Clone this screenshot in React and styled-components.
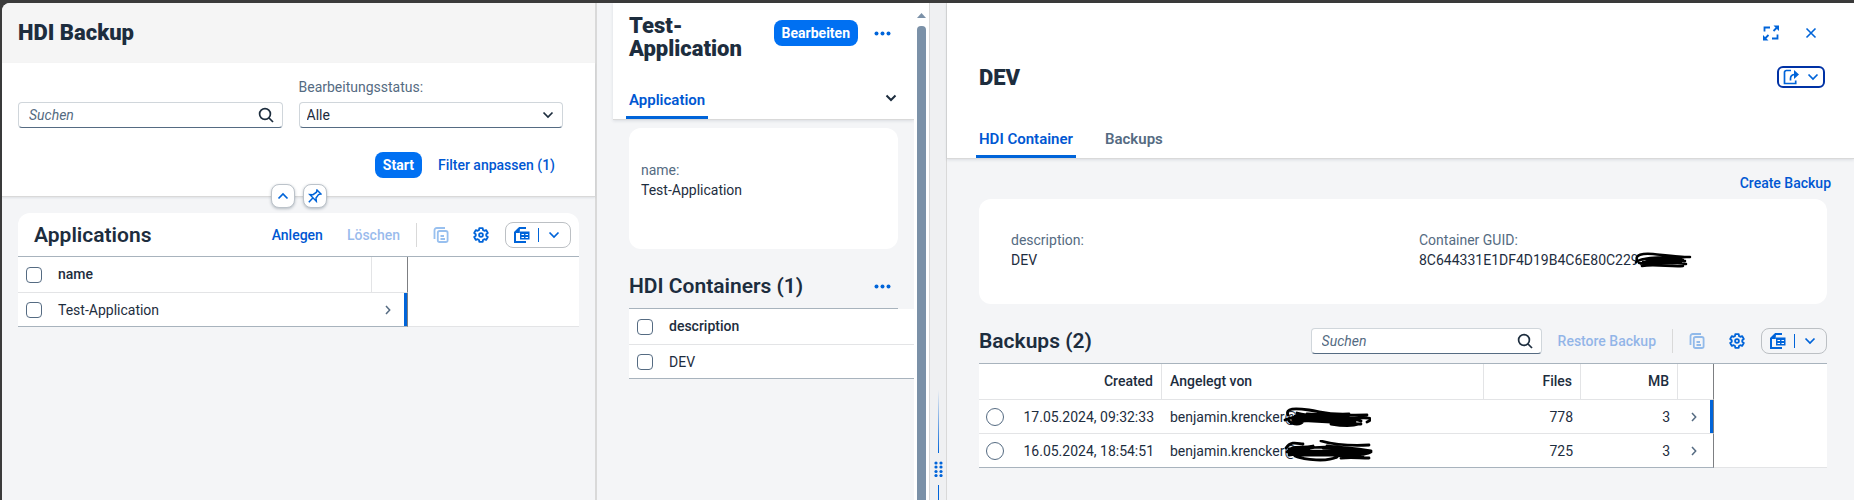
import React from 'react';
import styled, { createGlobalStyle, css } from 'styled-components';

const c = {
  text: '#1d2d3e',
  label: '#556b82',
  link: '#0057d2',
  icon: '#0064d9',
  brand: '#0070f2',
  line: '#a8b3bd',
  grid: '#e3e4e6',
  page: '#f4f5f7',
  edge: '#d9d9d9',
};

const GlobalStyle = createGlobalStyle`
  * { box-sizing: border-box; }
  body { margin: 0; background: #3b3b3b; }
  body, button, input, select {
    font-family: Roboto, "Liberation Sans", sans-serif;
    font-size: 14px;
    color: ${c.text};
  }
  h1, h2 { margin: 0; }
`;

/* ---------- page frame ---------- */

const Shell = styled.div`
  display: grid;
  grid-template-columns: 595fr 333fr 17px 907fr;
  min-height: 100vh;
  border-top: 3px solid #3b3b3b;
  border-left: 2px solid #3b3b3b;
`;

const ListPanel = styled.main`
  min-width: 0;
  background: ${c.page};
  border-right: 2px solid ${c.edge};
  border-top-left-radius: 8px;
`;

const ObjectPanel = styled.section`
  display: flex;
  min-width: 0;
  padding-left: 16px;
  background: ${c.page};
  border-right: 1px solid ${c.edge};
`;

const ObjectScroll = styled.div`
  flex: 1;
  min-width: 0;
`;

const DetailPanel = styled.section`
  min-width: 0;
  background: ${c.page};
`;

const ScrollTrack = styled.div`
  display: flex;
  flex-direction: column;
  align-items: center;
  gap: 8px;
  width: 15px;
  padding-top: 10px;
  background: #fff;
`;

const ScrollThumb = styled.div`
  flex: 1;
  width: 9px;
  border-radius: 4px 4px 0 0;
  background: #7b91a8;
`;

const Splitter = styled.div`
  display: flex;
  flex-direction: column;
  align-items: center;
  justify-content: flex-end;
  gap: 8px;
  background: #eff0f2;
  border-right: 1px solid ${c.edge};
`;

const GripLine = styled.div`
  width: 1px;
  height: ${(p) => p.$length}px;
  background: ${(p) => (p.$fade ? `linear-gradient(transparent, ${c.icon})` : c.icon)};
`;

/* ---------- text ---------- */

const Title = styled.h1`
  font-size: 22px;
  font-weight: 900;
  line-height: 23px;
`;

const SectionTitle = styled.h2`
  font-size: 21px;
  font-weight: 600;
  line-height: 24px;
  white-space: nowrap;
`;

const Label = styled.label`
  line-height: 16px;
  color: ${c.label};
`;

/* ---------- controls ---------- */

const Button = styled.button`
  display: inline-flex;
  align-items: center;
  justify-content: center;
  flex: none;
  height: 26px;
  padding: 0 8px;
  border: 0;
  border-radius: 8px;
  background: transparent;
  color: ${c.link};
  font-weight: 500;
  white-space: nowrap;
  &:disabled { opacity: 0.4; }
  ${(p) => p.$primary && css`
    background: ${c.brand};
    color: #fff;
    font-weight: 700;
  `}
`;

const IconButton = styled(Button)`
  width: 32px;
  padding: 0;
  color: ${c.icon};
`;

const RoundToggle = styled(IconButton)`
  width: 24px;
  height: 24px;
  border: 1px solid #bcc3ca;
  background: #fff;
  box-shadow: 0 1px 3px rgba(34, 53, 72, 0.3);
`;

const ShareButton = styled(IconButton)`
  gap: 8px;
  width: 48px;
  height: 22px;
  margin-right: 2px;
  border: 2px solid #0032a5;
  border-radius: 6px;
`;

const SplitButton = styled.div`
  display: flex;
  align-items: center;
  flex: none;
  width: 66px;
  height: 26px;
  border: 1px solid #bcc0c4;
  border-radius: 8px;
`;

const SplitPart = styled.button`
  display: flex;
  flex: 1;
  align-items: center;
  justify-content: center;
  height: 14px;
  padding: 0;
  border: 0;
  background: transparent;
  color: ${c.icon};
  & + & { border-left: 1px solid ${c.icon}; }
`;

const Divider = styled.span`
  width: 1px;
  height: 24px;
  background: ${c.edge};
`;

const Field = styled.div`
  display: flex;
  flex-direction: column;
  justify-content: flex-end;
  gap: 7px;
  min-width: 0;
`;

const boxed = css`
  height: 26px;
  border: 1px solid #d0d6db;
  border-bottom-color: ${c.label};
  border-radius: 4px;
  background: #fff;
`;

const SearchBox = styled.div`
  ${boxed}
  display: flex;
  align-items: center;
  width: ${(p) => p.$width || 'auto'};
  padding: 0 8px 0 10px;
`;

const SearchInput = styled.input`
  flex: 1;
  min-width: 0;
  padding: 0;
  border: 0;
  outline: 0;
  background: transparent;
  &::placeholder { color: ${c.label}; font-style: italic; opacity: 1; }
`;

const SelectBox = styled.div`
  display: grid;
  align-items: center;
  > * { grid-area: 1 / 1; }
  > svg { justify-self: end; margin-right: 9px; pointer-events: none; }
`;

const Select = styled.select`
  ${boxed}
  width: 100%;
  padding: 0 7px;
  appearance: none;
`;

const Check = styled.input`
  display: block;
  width: 16px;
  height: 16px;
  margin: 0 8px;
  appearance: none;
  border: 1px solid ${c.label};
  border-radius: 4px;
  background: #fff;
`;

const Radio = styled(Check)`
  width: 18px;
  height: 18px;
  margin: 0 7px;
  border-radius: 50%;
`;

/* ---------- list page ---------- */

const ListHeader = styled.header`
  display: flex;
  align-items: center;
  height: 60px;
  padding: 0 16px 2px;
  background: #f5f5f5;
  border-top-left-radius: 8px;
`;

const FilterBar = styled.form`
  position: relative;
  padding: 16px 32px 18px 16px;
  background: #fff;
  border-bottom: 1px solid ${c.edge};
  box-shadow: 0 1px 2px rgba(34, 53, 72, 0.1);
`;

const FilterFields = styled.div`
  display: grid;
  grid-template-columns: 1fr 1fr;
  gap: 16px;
`;

const FilterActions = styled.div`
  display: flex;
  justify-content: flex-end;
  gap: 8px;
  margin-top: 24px;
`;

const HeaderToggles = styled.div`
  position: absolute;
  left: 0;
  right: 0;
  bottom: -12px;
  display: flex;
  justify-content: center;
  gap: 8px;
`;

const ListCard = styled.section`
  margin: 16px;
  border-radius: 12px 12px 0 0;
  background: #fff;
`;

/* ---------- object pages ---------- */

const PageHeader = styled.header`
  background: #fff;
  border-bottom: 1px solid ${c.edge};
  box-shadow: 0 1px 3px rgba(34, 53, 72, 0.12);
`;

const TitleRow = styled.div`
  display: flex;
  align-items: flex-start;
  gap: 8px;
  padding: 11px 16px 0;
  > h1 { flex: 1; min-width: 0; }
  > button { margin-top: 6px; }
`;

const WindowActions = styled.div`
  display: flex;
  justify-content: flex-end;
  gap: 8px;
  padding: 17px 27px 18px;
`;

const DetailTitleRow = styled.div`
  display: flex;
  align-items: center;
  justify-content: space-between;
  height: 26px;
  padding: 0 27px 0 32px;
`;

const TabBar = styled.nav`
  display: flex;
  align-items: center;
  gap: 26px;
  margin-top: ${(p) => p.$top}px;
  padding: 0 ${(p) => p.$inset}px;
`;

const Tab = styled.button`
  height: 38px;
  padding: 0 3px;
  border: 0;
  background: transparent;
  font-size: 15px;
  font-weight: 600;
  color: ${(p) => (p['aria-selected'] ? c.link : c.label)};
  box-shadow: ${(p) => (p['aria-selected'] ? `inset 0 -3px ${c.icon}` : 'none')};
`;

const TabMenu = styled.button`
  display: flex;
  margin: 0 4px 4px auto;
  padding: 0;
  border: 0;
  background: transparent;
`;

const PageBody = styled.div`
  padding: ${(p) => p.$pad};
`;

const BodyActions = styled.div`
  display: flex;
  justify-content: flex-end;
  padding: 11px 0 3px;
  margin-right: -12px;
`;

const InfoCard = styled.dl`
  display: grid;
  grid-template-columns: repeat(${(p) => p.$columns}, 1fr);
  gap: 32px;
  margin: 0 0 15px;
  padding: ${(p) => p.$pad};
  border-radius: 12px;
  background: #fff;
  line-height: 20px;
  dt { color: ${c.label}; }
  dd { margin: 0; }
`;

/* ---------- tables ---------- */

const Toolbar = styled.div`
  display: flex;
  align-items: center;
  gap: 8px;
  height: ${(p) => (p.$card ? 44 : 45)}px;
  padding: ${(p) => (p.$card ? '0 8px 0 16px' : '0')};
  border-bottom: 1px solid ${c.line};
  > h2 { flex: 1; }
`;

const Bleed = styled.div`
  margin-right: -16px;
`;

const Table = styled.table`
  width: 100%;
  table-layout: fixed;
  border-spacing: 0;
  background: #fff;
  tbody tr:last-child td { border-bottom-color: ${c.line}; }
  tbody tr:last-child td:empty { border-bottom-color: ${c.grid}; }
`;

const Col = styled.col`
  width: ${(p) => (p.$w ? `${p.$w}px` : 'auto')};
`;

const Th = styled.th`
  height: 36px;
  padding: 0 8px 2px;
  border-bottom: 1px solid ${c.grid};
  border-right: ${(p) => (p.$sep ? `1px solid ${c.grid}` : '0')};
  text-align: ${(p) => (p.$end ? 'right' : 'left')};
  font-weight: 500;
`;

const SelectTh = styled.th`
  padding: 0;
  border-bottom: 1px solid ${c.grid};
`;

const EndTh = styled(SelectTh)`
  border-right: 1px solid #7d7f82;
`;

const Td = styled.td`
  height: 34px;
  padding: ${(p) => (p.$flush ? '0' : '0 8px')};
  border-bottom: ${(p) => (p.$filler && !p.$last ? '0' : `1px solid ${c.grid}`)};
  text-align: ${(p) => (p.$end ? 'right' : 'left')};
  white-space: nowrap;
`;

const NavTd = styled(Td)`
  padding: 1px 0 0 12px;
  border-right: 1px solid #7d7f82;
  box-shadow: ${(p) => (p.$active ? `inset -3px 0 ${c.icon}` : 'none')};
  color: ${c.label};
`;

const Redacted = styled.span`
  display: inline-flex;
  align-items: center;
  height: 20px;
  > svg { flex: none; margin-left: ${(p) => p.$shift}px; }
`;

/* ---------- icons ---------- */

const Svg = ({ w = 16, h = 16, sw = 2, children }) => (
  <svg width={w} height={h} viewBox={`0 0 ${w} ${h}`} fill="none" stroke="currentColor" strokeWidth={sw} aria-hidden="true">
    {children}
  </svg>
);

const SearchIcon = () => (
  <Svg sw={1.7}><circle cx="7" cy="7" r="5.4" /><path d="M11 11l4 4" /></Svg>
);
const ChevronDown = ({ sw = 1.7 }) => (
  <Svg w={12} h={8} sw={sw}><path d="M1.5 1.5L6 6l4.5-4.5" /></Svg>
);
const ChevronUp = () => (
  <Svg w={12} h={8} sw={1.7}><path d="M1.5 6.5L6 2l4.5 4.5" /></Svg>
);
const ChevronRight = () => (
  <Svg w={8} h={10} sw={1.5}><path d="M2 1l3.7 4L2 9" /></Svg>
);
const PinIcon = () => (
  <Svg w={14} h={14} sw={1.5}>
    <path d="M9 1l4 4-2.5.6L8 9l.3 3.2L1.7 5.5 5 5.7 8.5 3.200zM4.8 9L.8 13.3" />
  </Svg>
);
const CopyIcon = () => (
  <Svg sw={1.8}>
    <path d="M1.5 12V3.3A2.3 2.3 0 0 1 3.8 1H12" />
    <rect x="4.8" y="4" width="9.8" height="11" rx="1.8" />
    <path d="M7.5 9H11M7.5 12h4.500" />
  </Svg>
);

const gearPoints = [0, 60, 120, 180, 240, 300]
  .flatMap((a) => [[-22, 5.3], [-14, 7.1], [14, 7.1], [22, 5.3]].map(([d, r]) => {
    const t = ((a + d - 90) * Math.PI) / 180;
    return `${(8 + r * Math.cos(t)).toFixed(2)},${(8 + r * Math.sin(t)).toFixed(2)}`;
  }))
  .join(' ');
const GearIcon = () => (
  <Svg sw={1.8}><polygon points={gearPoints} strokeLinejoin="round" /><circle cx="8" cy="8" r="1.9" /></Svg>
);
const ExcelIcon = () => (
  <Svg sw={2}>
    <path d="M12 1H5.5L1 5.5V15h11" />
    <path d="M5.8.5V6H.5z" fill="currentColor" stroke="none" />
    <rect x="6" y="4.500" width="9.500" height="8" fill="currentColor" stroke="none" />
    <path d="M7.5 7.500h2.500M11.500 7.500h2.500M7.500 10.500h2.500M11.500 10.500h2.500" stroke="#fff" strokeWidth="1" />
  </Svg>
);
const DotsIcon = () => (
  <svg width="17" height="5" viewBox="0 0 17 5" fill={c.icon} aria-hidden="true">
    <circle cx="2.5" cy="2.5" r="2" /><circle cx="8.5" cy="2.5" r="2" /><circle cx="14.5" cy="2.5" r="2" />
  </svg>
);
const ExpandIcon = () => (
  <Svg sw={1.8}>
    <path d="M1.5 6.5V2.5H7M14.5 9.5v4H9M10.5 6L14 2.5M5.5 10L2 13.5" />
    <path d="M10.500.5H16V6zM0 10v5.500h5.500z" fill="currentColor" stroke="none" />
  </Svg>
);
const CloseIcon = () => (
  <Svg w={12} h={12} sw={1.6}><path d="M1.5 1.5l9 9M10.5 1.5l-9 9" /></Svg>
);
const ShareIcon = () => (
  <Svg sw={1.7}>
    <path d="M8 1.5H3.3A1.8 1.8 0 0 0 1.5 3.3V14.5h11.2V11.5M7.5 11.5V9.5C7.5 7 9 5.5 12 5.5" />
    <path d="M11 1l5 4.5-5 4.5z" fill="currentColor" stroke="none" />
  </Svg>
);
const ArrowUp = () => (
  <svg width="9" height="5" viewBox="0 0 9 5" aria-hidden="true"><path d="M4.5 0L9 5H0z" fill="#7b91a8" /></svg>
);
const GripDots = () => (
  <svg width="9" height="16" viewBox="0 0 9 16" fill={c.icon} aria-hidden="true">
    {[2, 6, 10.5, 14.5].map((y) => (
      <React.Fragment key={y}><circle cx="2" cy={y} r="1.6" /><circle cx="7" cy={y} r="1.6" /></React.Fragment>
    ))}
  </svg>
);

/* Pen strokes that black out part of a value */
const inkShapes = {
  guid: {
    w: 60, h: 18,
    d: 'M4 9C2 4 9 2 20 3S42 6 57 6M3 11C12 5 34 7 53 6M8 13C20 9 38 8 52 10M9 15C22 13 38 16 50 15M6 12C20 13 36 11 53 13M12 8C26 12 42 9 50 9M10 11H48M10 13L46 12M20 7L48 8',
  },
  first: {
    w: 88, h: 22,
    d: 'M5 9C2 2 12 2 26 4S44 9 66 8M2 14C16 8 40 9 66 9M12 10C30 6 46 10 84 9M10 14C34 10 56 13 76 12S84 16 84 16M8 17C26 12 50 16 78 18M14 7C30 12 58 8 78 15M48 18C60 20 70 20 76 18M6 15C10 19 18 19 20 15M16 12C36 13 52 12 70 14M14 9L66 12M14 11L72 16M12 14L66 17M24 8L60 10',
  },
  second: {
    w: 90, h: 22,
    d: 'M3 8C8 0 16 4 20 4M4 12C10 4 18 9 30 6M6 13C24 6 46 6 66 9M38 1C52 5 66 6 86 5M44 6C60 8 72 8 88 11M6 15C24 12 52 10 84 12M22 14C44 11 62 15 82 14M12 16C22 20 44 22 54 17M58 18C68 17 76 18 86 18M64 15C74 15 84 15 88 12M10 10C30 13 50 8 74 15M16 16C34 12 58 17 80 17M6 9L26 9M6 11L76 12M12 13L78 14M16 15L70 15M40 8L74 10',
  },
};
const Ink = ({ kind }) => {
  const s = inkShapes[kind];
  return (
    <svg width={s.w} height={s.h} viewBox={`0 0 ${s.w} ${s.h}`} fill="none" stroke="#000" strokeWidth={kind === 'guid' ? 2.5 : 2.8} strokeLinecap="round" aria-hidden="true">
      <path d={s.d} />
    </svg>
  );
};

/* ---------- parts ---------- */

const Search = ({ width, label }) => (
  <SearchBox $width={width}>
    <SearchInput type="text" placeholder="Suchen" aria-label={label} />
    <SearchIcon />
  </SearchBox>
);

const TableTools = () => (
  <>
    <Divider />
    <IconButton type="button" disabled aria-label="Kopieren"><CopyIcon /></IconButton>
    <IconButton type="button" aria-label="Einstellungen"><GearIcon /></IconButton>
    <SplitButton>
      <SplitPart type="button" aria-label="Exportieren"><ExcelIcon /></SplitPart>
      <SplitPart type="button" aria-label="Exportoptionen"><ChevronDown /></SplitPart>
    </SplitButton>
  </>
);

const backups = [
  { created: '17.05.2024, 09:32:33', by: 'benjamin.krencker@', ink: 'first', files: 778, mb: 3, active: true },
  { created: '16.05.2024, 18:54:51', by: 'benjamin.krencker@', ink: 'second', files: 725, mb: 3 },
];

const ApplicationList = () => (
  <ListPanel>
    <ListHeader><Title>HDI Backup</Title></ListHeader>
    <FilterBar onSubmit={(e) => e.preventDefault()}>
      <FilterFields>
        <Field><Search label="Suchen" /></Field>
        <Field>
          <Label htmlFor="status">Bearbeitungsstatus:</Label>
          <SelectBox>
            <Select id="status"><option>Alle</option></Select>
            <ChevronDown />
          </SelectBox>
        </Field>
      </FilterFields>
      <FilterActions>
        <Button $primary>Start</Button>
        <Button type="button">Filter anpassen (1)</Button>
      </FilterActions>
      <HeaderToggles>
        <RoundToggle type="button" aria-label="Kopfbereich ausblenden"><ChevronUp /></RoundToggle>
        <RoundToggle type="button" aria-label="Kopfbereich anheften"><PinIcon /></RoundToggle>
      </HeaderToggles>
    </FilterBar>
    <ListCard>
      <Toolbar $card>
        <SectionTitle>Applications</SectionTitle>
        <Button type="button">Anlegen</Button>
        <Button type="button" disabled>Löschen</Button>
        <TableTools />
      </Toolbar>
      <Table>
        <colgroup><Col $w={32} /><Col /><Col $w={36} /><Col $w={171} /></colgroup>
        <thead>
          <tr>
            <SelectTh><Check type="checkbox" aria-label="Alle auswählen" /></SelectTh>
            <Th $sep>name</Th>
            <EndTh />
            <td />
          </tr>
        </thead>
        <tbody>
          <tr>
            <Td $flush><Check type="checkbox" aria-label="Test-Application auswählen" /></Td>
            <Td>Test-Application</Td>
            <NavTd $active><ChevronRight /></NavTd>
            <Td $flush $filler $last />
          </tr>
        </tbody>
      </Table>
    </ListCard>
  </ListPanel>
);

const ApplicationPage = () => (
  <ObjectPanel>
    <ObjectScroll>
      <PageHeader>
        <TitleRow>
          <Title>Test-Application</Title>
          <Button type="button" $primary>Bearbeiten</Button>
          <IconButton type="button" aria-label="Weitere Aktionen"><DotsIcon /></IconButton>
        </TitleRow>
        <TabBar $top={21} $inset={13}>
          <Tab type="button" role="tab" aria-selected>Application</Tab>
          <TabMenu type="button" aria-label="Abschnitte"><ChevronDown sw={2} /></TabMenu>
        </TabBar>
      </PageHeader>
      <PageBody $pad="8px 16px">
        <InfoCard $columns={1} $pad="32px 12px 49px">
          <div><dt>name:</dt><dd>Test-Application</dd></div>
        </InfoCard>
        <Toolbar>
          <SectionTitle>HDI Containers (1)</SectionTitle>
          <IconButton type="button" aria-label="Weitere Aktionen"><DotsIcon /></IconButton>
        </Toolbar>
        <Bleed>
          <Table>
            <colgroup><Col $w={32} /><Col /></colgroup>
            <thead>
              <tr>
                <SelectTh><Check type="checkbox" aria-label="Alle auswählen" /></SelectTh>
                <Th>description</Th>
              </tr>
            </thead>
            <tbody>
              <tr>
                <Td $flush><Check type="checkbox" aria-label="DEV auswählen" /></Td>
                <Td>DEV</Td>
              </tr>
            </tbody>
          </Table>
        </Bleed>
      </PageBody>
    </ObjectScroll>
    <ScrollTrack><ArrowUp /><ScrollThumb /></ScrollTrack>
  </ObjectPanel>
);

const ContainerPage = () => (
  <DetailPanel>
    <PageHeader>
      <WindowActions>
        <IconButton type="button" aria-label="Vollbild"><ExpandIcon /></IconButton>
        <IconButton type="button" aria-label="Schließen"><CloseIcon /></IconButton>
      </WindowActions>
      <DetailTitleRow>
        <Title>DEV</Title>
        <ShareButton type="button" aria-label="Teilen"><ShareIcon /><ChevronDown /></ShareButton>
      </DetailTitleRow>
      <TabBar $top={30} $inset={29}>
        <Tab type="button" role="tab" aria-selected>HDI Container</Tab>
        <Tab type="button" role="tab">Backups</Tab>
      </TabBar>
    </PageHeader>
    <PageBody $pad="0 27px 16px 32px">
      <BodyActions><Button type="button">Create Backup</Button></BodyActions>
      <InfoCard $columns={2} $pad="31px 32px 34px">
        <div><dt>description:</dt><dd>DEV</dd></div>
        <div>
          <dt>Container GUID:</dt>
          <dd><Redacted $shift={-6}>8C644331E1DF4D19B4C6E80C229<Ink kind="guid" /></Redacted></dd>
        </div>
      </InfoCard>
      <Toolbar>
        <SectionTitle>Backups (2)</SectionTitle>
        <Search width="231px" label="Backups suchen" />
        <Button type="button" disabled>Restore Backup</Button>
        <TableTools />
      </Toolbar>
      <Table>
        <colgroup>
          <Col $w={32} /><Col $w={151} /><Col /><Col $w={97} /><Col $w={97} /><Col $w={36} /><Col $w={113} />
        </colgroup>
        <thead>
          <tr>
            <SelectTh />
            <Th $sep $end>Created</Th>
            <Th $sep>Angelegt von</Th>
            <Th $sep $end>Files</Th>
            <Th $sep $end>MB</Th>
            <EndTh />
            <td />
          </tr>
        </thead>
        <tbody>
          {backups.map((b, i) => (
            <tr key={b.created}>
              <Td $flush><Radio type="radio" name="backup" aria-label={b.created} /></Td>
              <Td $end>{b.created}</Td>
              <Td><Redacted $shift={-14}>{b.by}<Ink kind={b.ink} /></Redacted></Td>
              <Td $end>{b.files}</Td>
              <Td $end>{b.mb}</Td>
              <NavTd $active={b.active}><ChevronRight /></NavTd>
              <Td $flush $filler $last={i === backups.length - 1} />
            </tr>
          ))}
        </tbody>
      </Table>
    </PageBody>
  </DetailPanel>
);

export default function App() {
  return (
    <>
      <GlobalStyle />
      <Shell>
        <ApplicationList />
        <ApplicationPage />
        <Splitter>
          <GripLine $length={63} $fade />
          <GripDots />
          <GripLine $length={15} />
        </Splitter>
        <ContainerPage />
      </Shell>
    </>
  );
}
